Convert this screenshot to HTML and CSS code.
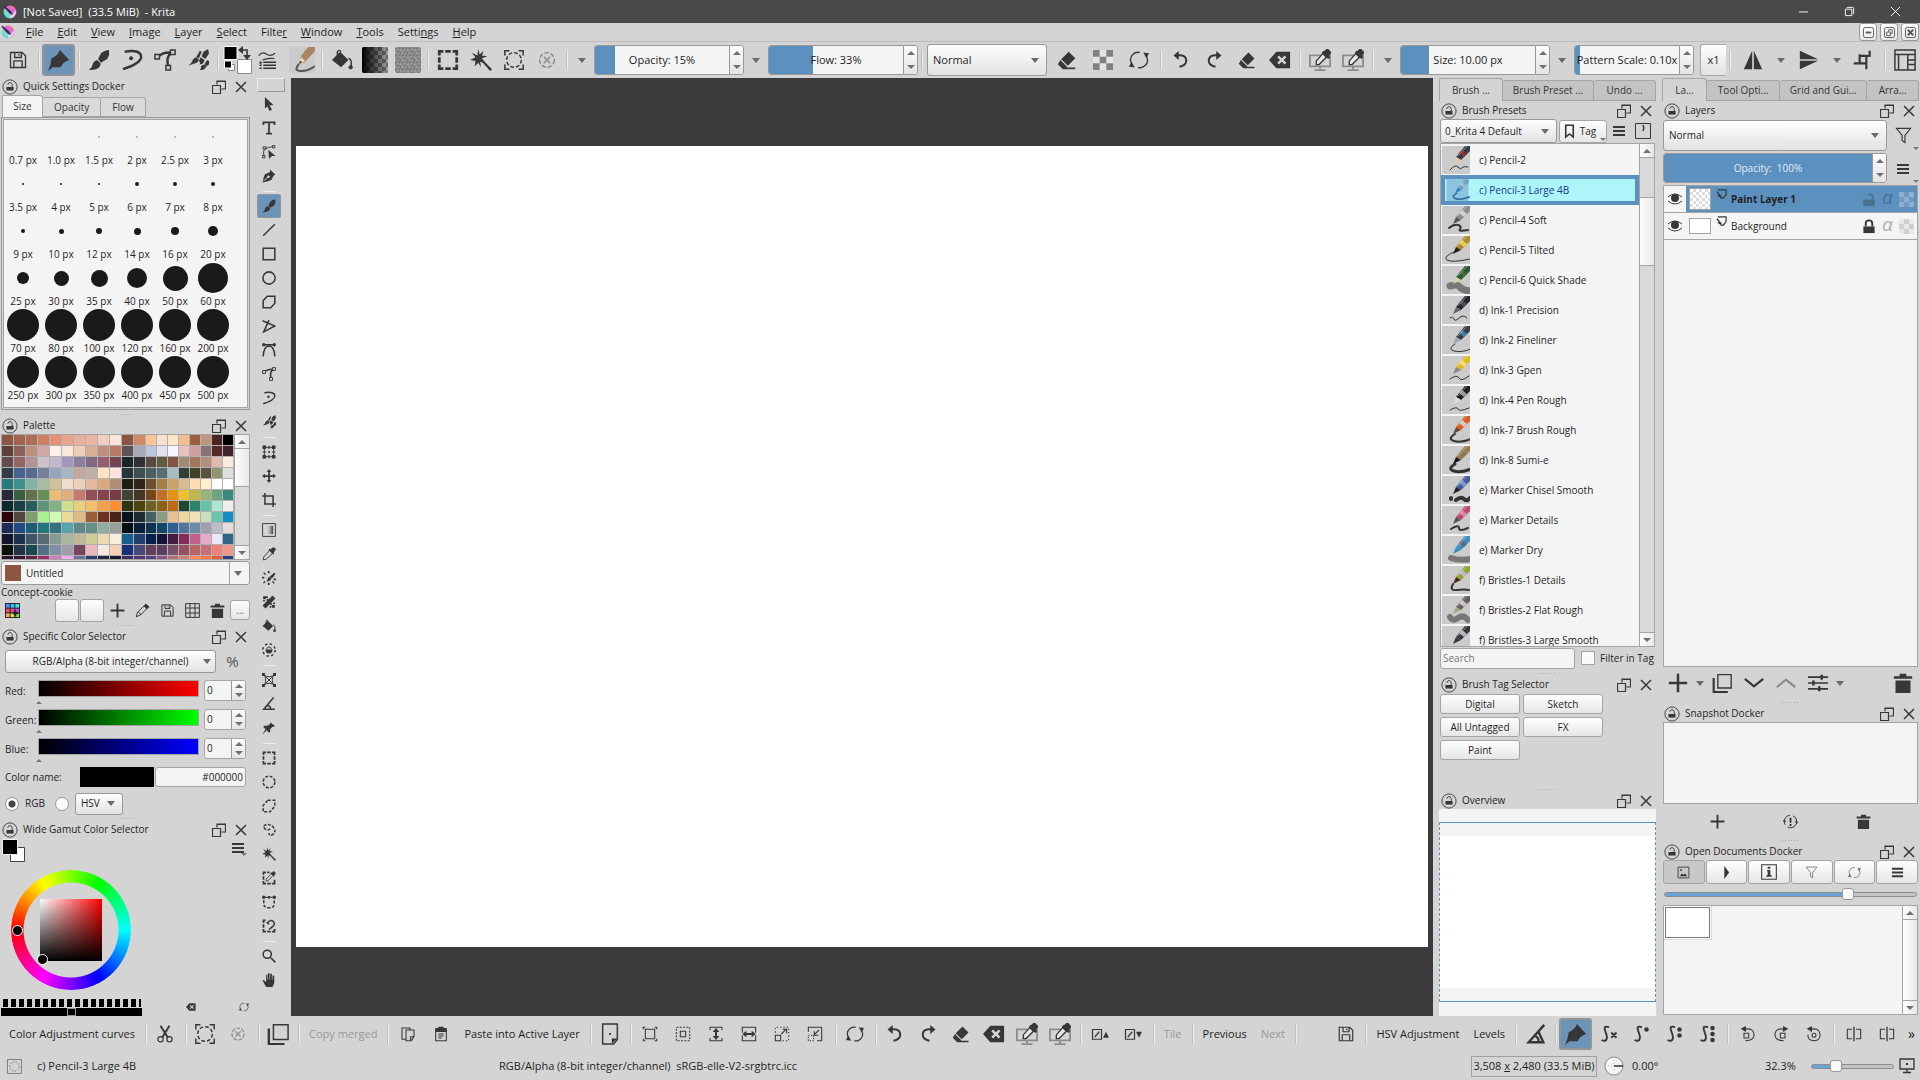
FILE: index.html
```html
<!DOCTYPE html>
<html lang="en">
<head>
<meta charset="utf-8">
<title>[Not Saved] (33.5 MiB) - Krita</title>
<link rel="stylesheet" href="styles.css">
</head>
<body>
<svg class="sprite" aria-hidden="true">
  <defs>
    <linearGradient id="g-logo" x1="0" y1="1" x2="1" y2="0"><stop offset="0" stop-color="#25d8f5"/><stop offset=".35" stop-color="#7fe0c8"/><stop offset=".6" stop-color="#e25cf0"/><stop offset="1" stop-color="#ff8a4a"/></linearGradient>
    <linearGradient id="g-dark"><stop offset="0" stop-color="#fff" stop-opacity="0"/><stop offset="1" stop-color="#373737"/></linearGradient>
    <linearGradient id="g-black"><stop offset="0" stop-color="#000"/><stop offset="1" stop-color="#000" stop-opacity="0"/></linearGradient>
    <pattern id="p-check" width="8" height="8" patternUnits="userSpaceOnUse"><path fill="#a0a0a0" d="M0 0h8v8H0z"/><path fill="#686868" d="M0 0h4v4H0zM4 4h4v4H4z"/></pattern>
    <pattern id="p-noise" width="7" height="7" patternUnits="userSpaceOnUse"><path fill="#8c8c8c" d="M0 0h7v7H0z"/><path fill="#757575" d="M0 1h2v1H0zM4 0h1v2H4zM2 4h2v1H2zM5 5h1v2H5z"/><path fill="#a2a2a2" d="M2 2h1v1H2zM5 3h2v1H5zM0 5h1v2H0zM3 6h1v1H3z"/></pattern>
  </defs>
  <symbol id="logo" viewBox="0 0 24 24"><circle cx="12" cy="12" r="11" fill="url(#g-logo)"/><path d="M2 1l12 10 3 6-6-3L1 3z" fill="#2b2b3b"/><path d="M12 20q8 0 9-9" stroke="#ffd8f4" stroke-width="3" fill="none"/></symbol>
  <symbol id="save" viewBox="0 0 24 24"><path class="s2" d="M3 3h14l4 4v14H3zM8 3v6h8V3M7 21v-8h10v8M13 5v2"/></symbol>
  <symbol id="marker" viewBox="0 0 24 24"><path d="M0 24Q3 18 4 10Q11 7 13 1L23 12Q16 14 14 20L5 20z"/></symbol>
  <symbol id="brush" viewBox="0 0 24 24"><path d="M23 1Q24 6 21 11L14 15L11 11L14 5Q18 1 23 1zM10 12L14 16Q13 23 1 23Q5 20 5 17Q6 13 10 12z"/></symbol>
  <symbol id="dyn" viewBox="0 0 24 24"><path class="s3" d="M4 3Q22 0 22 9Q21 16 2 22"/><circle cx="11" cy="10" r="2.2"/></symbol>
  <symbol id="fpath" viewBox="0 0 24 24"><path class="s3" d="M4 9Q9 3 20 4Q12 8 16 20"/><path class="s2 lite" d="M1 6h5v5H1zM18 1h5v5h-5zM13 18h5v5h-5z"/></symbol>
  <symbol id="multi" viewBox="0 0 24 24"><path d="M23 0l1 5-4 6-4-3 2-5zM15 9l4 3q0 4-5 5 1-2-1-4zM14 2l2 1-3 7-3-1zM9 9l4 2-1 3q-2 2-11 4 5-3 5-6zM22 12l2 1v4l-3 2-2-2zM18 17l3 2q-1 4-7 4 2-2 1-4z"/></symbol>
  <symbol id="lines" viewBox="0 0 24 24"><path class="s2" d="M1 6Q6 0 11 4T23 3M6 12Q12 9 22 10"/><path d="M2 14h3v3H2zM7 14h17v2H7zM2 18h3v2H2zM7 18h17v2H7zM2 22h3v2H2zM7 22h17v2H7z"/></symbol>
  <symbol id="fill" viewBox="0 0 24 24"><path d="M10 3l9 9-8 8-10-8z"/><path class="s2" d="M7 10V3q2-3 4 0M19 10q4 1 3 9"/><circle cx="21.500" cy="20" r="2.300"/></symbol>
  <symbol id="gradbox" viewBox="0 0 26 26"><rect width="26" height="26" rx="2" fill="url(#p-check)"/><rect width="26" height="26" rx="2" fill="url(#g-black)"/></symbol>
  <symbol id="noise" viewBox="0 0 26 26"><rect width="26" height="26" rx="2" fill="url(#p-noise)"/></symbol>
  <symbol id="pencil-thumb" viewBox="0 0 26 26"><path fill="#cbcbcb" d="M0 0h26v26H0z"/><path d="M10 17L12 9L19 0H26V4L16 15z" fill="#a98660"/><path d="M10 17l2-7 4 4z" fill="#f2d9bc"/><path d="M10 17l1-3 2 1z" fill="#222"/><path d="M10 17q-6 7 2 7t14-5" stroke="#555" stroke-width="2" fill="none"/></symbol>
  <symbol id="selrect" viewBox="0 0 24 24"><path d="M1 1h6v3H4v3H1zM9 1h6v3H9zM17 1h6v6h-3V4h-3zM1 9h3v6H1zM20 9h3v6h-3zM1 17h3v3h3v3H1zM9 20h6v3H9zM20 17h3v6h-6v-3h3z"/></symbol>
  <symbol id="selell" viewBox="0 0 24 24"><circle class="s3" cx="12" cy="12" r="10" stroke-dasharray="5 2.850"/></symbol>
  <symbol id="selpoly" viewBox="0 0 24 24"><path class="s3" stroke-dasharray="5 3" d="M10 2h12v10l-8 10H2V11z"/></symbol>
  <symbol id="selfree" viewBox="0 0 24 24"><path class="s3" stroke-dasharray="5 2.500" d="M14 10Q10 14 5 10Q0 5 7 3Q14 1 20 8Q25 15 18 20Q12 23 12 17"/></symbol>
  <symbol id="selbez" viewBox="0 0 24 24"><path class="s3" stroke-dasharray="5 3" d="M3 9v6q0 7 9 7t9-7V9"/><path class="s2" d="M3 4h18"/><circle cx="3" cy="4" r="3"/><circle cx="12" cy="4" r="2.500"/><circle cx="21" cy="4" r="3"/></symbol>
  <symbol id="selmag" viewBox="0 0 24 24"><path d="M1 1h5v3H4v3H1zM1 9h3v6H1zM1 17h3v3h3v3H1zM9 20h6v3H9zM20 17h3v6h-6v-3h3z"/><path class="s3" d="M9 7Q14 0 19 4Q24 9 17 14L12 18M8 5l4 4"/></symbol>
  <symbol id="selpick" viewBox="0 0 24 24"><path d="M1 1h6v3H4v3H1zM9 1h4v3H9zM1 9h3v6H1zM1 17h3v3h3v3H1zM9 20h6v3H9zM20 15h3v8h-6v-3h3z"/><path d="M17 3l3-3 4 4-3 3 1 1-2 2-6-6 2-2z"/><path class="s2" d="M15 6l-8 8v3h3l8-8"/></symbol>
  <symbol id="wand" viewBox="0 0 24 24"><path d="M9 0l1.500 6L15 2l-2 5 6 1-6 2 3 4 8 8-2 2-8-9-3-1 1 6-3-5-4 4 1-6-6-1 6-3-4-5 6 3z"/></symbol>
  <symbol id="selall" viewBox="0 0 24 24"><path class="s2" d="M2 7V2h5M17 2h5v5M22 17v5h-5M7 22H2v-5"/><circle class="s2" cx="12" cy="12" r="8" stroke-dasharray="4 2.280"/></symbol>
  <symbol id="desel" viewBox="0 0 24 24"><circle class="s2" cx="12" cy="12" r="8" stroke-dasharray="5 1.900"/><path class="s2" d="M8.500 8.500l7 7M15.500 8.500l-7 7"/></symbol>
  <symbol id="eraser" viewBox="0 0 24 24"><path d="M14 2l8 8-9 9-8-8zM4 12l8 8v3H7l-6-6z"/><path d="M12 21h10v2H12z"/></symbol>
  <symbol id="checker" viewBox="0 0 24 24"><path fill="#e4e4e4" d="M0 0h24v24H0z"/><path fill="#808080" d="M0 0h8v8H0zM16 0h8v8h-8zM8 8h8v8H8zM0 16h8v8H0zM16 16h8v8h-8z"/></symbol>
  <symbol id="reload" viewBox="0 0 24 24"><path class="s2" d="M4 18Q-1 10 5 5Q8 2 13 3M20 6Q25 14 19 19Q16 22 11 21"/><path d="M3 14l4 7-7-1zM21 10l-4-7 7 1z"/></symbol>
  <symbol id="undo" viewBox="0 0 24 24"><path class="s3" d="M6 6Q19 4 19 13Q19 19 10 21"/><path d="M9 0v12L2 6z"/></symbol>
  <symbol id="redo" viewBox="0 0 24 24"><path class="s3" d="M18 6Q5 4 5 13Q5 19 14 21"/><path d="M15 0v12l7-6z"/></symbol>
  <symbol id="backsp" viewBox="0 0 24 24"><path fill-rule="evenodd" d="M8 3h15v18H8l-8-9zM11 7l-2 2 3 3-3 3 2 2 3-3 3 3 2-2-3-3 3-3-2-2-3 3z"/></symbol>
  <symbol id="monpick" viewBox="0 0 24 24"><path d="M1 7h22v12H1zM12 19v4M6 23h12" fill="none" stroke="#8c8c8c" stroke-width="2"/><path d="M17 2l3-3 5 5-3 3 1 2-2 2-7-7 2-2z"/><path fill="#e8e8e8" stroke="currentColor" stroke-width="1.500" d="M15 5l-7 8v4h3l8-8z"/></symbol>
  <symbol id="mirh" viewBox="0 0 24 24"><path d="M11 1v22H1zM13 1v22h10z"/></symbol>
  <symbol id="mirv" viewBox="0 0 24 24"><path d="M1 11h22L1 1zM1 13h22L1 23z"/></symbol>
  <symbol id="wrap" viewBox="0 0 24 24"><path class="s3" d="M8 5v12M8 7h12M1 16h15M16 7v16M20 1v7"/></symbol>
  <symbol id="layout" viewBox="0 0 24 24"><path class="s2" d="M1 1h22v22H1zM1 6h22M15 6v17M15 12h8M15 17h8M5 6v17"/></symbol>
  <symbol id="lock" viewBox="0 0 18 18"><circle cx="9" cy="9" r="8" fill="none" stroke="currentColor"/><path d="M5 9h8v4H5z"/><path d="M6.500 6.500Q7 4 9 4t2.500 2.500V9" fill="none" stroke="currentColor"/></symbol>
  <symbol id="float" viewBox="0 0 14 14"><path d="M5 4.500V1h8.500v8H9.500M.5 5.500h8v8h-8zM5 1.500h8" fill="none" stroke="currentColor" stroke-width="1.200"/></symbol>
  <symbol id="close" viewBox="0 0 14 14"><path d="M2 2l10 10M12 2L2 12" stroke="currentColor" stroke-width="1.500"/></symbol>
  <symbol id="menu" viewBox="0 0 14 14"><path d="M1 2h12v2H1zM1 6h12v2H1zM1 10h12v2H1z"/></symbol>
  <symbol id="plus" viewBox="0 0 24 24"><path d="M10.500 1h3v9.500H23v3h-9.500V23h-3v-9.500H1v-3h9.500z"/></symbol>
  <symbol id="pencil" viewBox="0 0 24 24"><path class="s2" d="M2 22l2-7L17 2l5 4L9 19zM5 14l5 5"/><path d="M14 5l3-4 6 5-4 4z"/></symbol>
  <symbol id="grid" viewBox="0 0 24 24"><path class="s2" d="M1 1h22v22H1zM8 1v22M16 1v22M1 8h22M1 16h22"/></symbol>
  <symbol id="trash" viewBox="0 0 24 24"><path d="M1 4h22v3H1zM3 9h18v15H3zM8 1h8v3H8z"/></symbol>
  <symbol id="rainbow" viewBox="0 0 16 16"><path fill="#222" d="M0 0h16v16H0z"/><path fill="#4d8cf0" d="M1 1h4v4H1z"/><path fill="#44b8f0" d="M6 1h4v4H6z"/><path fill="#3fe0e0" d="M11 1h4v4h-4z"/><path fill="#e84a5a" d="M1 6h4v4H1z"/><path fill="#d84aa0" d="M6 6h4v4H6z"/><path fill="#c44ae8" d="M11 6h4v4h-4z"/><path fill="#f0b050" d="M1 11h4v4H1z"/><path fill="#e8e050" d="M6 11h4v4H6z"/><path fill="#7ae850" d="M11 11h4v4h-4z"/><path fill="#222" d="M10 8h2v6h-2zM8 10h6v2H8z"/></symbol>
  <symbol id="arrow" viewBox="0 0 24 24"><path d="M5 0l15 14h-7l4 8-4 2-4-8-4 4z"/></symbol>
  <symbol id="text" viewBox="0 0 24 24"><path d="M1 1h22v6h-3V4h-6.500v16H17v3H7v-3h3.500V4H4v3H1z"/></symbol>
  <symbol id="edit" viewBox="0 0 24 24"><path class="s2" d="M1 18h4v4H1zM2 3h5v4H2zM18 1h4v4h-4zM3 18Q2 8 5 7Q12 3 18 3"/><path d="M11 8l12 11h-6l-5 5z"/></symbol>
  <symbol id="calli" viewBox="0 0 24 24"><path fill-rule="evenodd" d="M14 1l9 9-3 1-4 8Q9 22 1 23Q2 15 5 9l9-4zM11 11a2.200 2.200 0 1 0 .1 0zM3 21l7-6-1-1-7 6z"/></symbol>
  <symbol id="line" viewBox="0 0 24 24"><path class="s3" d="M2 22L22 2"/></symbol>
  <symbol id="rect" viewBox="0 0 24 24"><path class="s3" d="M2 2h20v20H2z"/></symbol>
  <symbol id="ell" viewBox="0 0 24 24"><circle class="s3" cx="12" cy="12" r="10.500"/></symbol>
  <symbol id="poly" viewBox="0 0 24 24"><path class="s3" d="M9 2h13v12l-7 8H2V10z"/></symbol>
  <symbol id="polyl" viewBox="0 0 24 24"><path class="s3" d="M1 3l21 9L3 22 12 2"/></symbol>
  <symbol id="bez" viewBox="0 0 24 24"><path class="s3" d="M2 23Q3 5 12 5T22 23M3 3h18"/><circle cx="3" cy="3" r="3"/><circle cx="21" cy="3" r="3"/></symbol>
  <symbol id="transform" viewBox="0 0 24 24"><path class="s2" d="M1 4h22M4 1v22M1 20h22M20 1v22"/><path d="M1 1h6v6H1zM17 1h6v6h-6zM1 17h6v6H1zM17 17h6v6h-6zM10.500 10.500h3v3h-3zM11 1h2v6h-2zM11 17h2v6h-2zM1 11h6v2H1zM17 11h6v2h-6z"/></symbol>
  <symbol id="move" viewBox="0 0 24 24"><path d="M12 0l4 5h-2.500v5.500H19V8l5 4-5 4v-2.500h-5.500V19H16l-4 5-4-5h2.500v-5.500H5V16l-5-4 5-4v2.500h5.500V5H8z"/></symbol>
  <symbol id="crop" viewBox="0 0 24 24"><path class="s3" d="M5 0v19h19M0 5h19v19"/></symbol>
  <symbol id="gradient" viewBox="0 0 24 24"><rect x="5" y="5" width="14" height="14" fill="url(#g-dark)"/><path class="s2" d="M1 1h22v22H1z"/></symbol>
  <symbol id="picker" viewBox="0 0 24 24"><path d="M15 4l3-3q4-1 5 1t0 4l-3 3 1 2-2 2-8-8 2-2z"/><path class="s2" d="M12 7l-9 10-1 5 5-1 10-9"/></symbol>
  <symbol id="colorize" viewBox="0 0 24 24"><path d="M21 3l2 2-6 8-4-3zM12 10l4 3q-1 5-9 5 3-2 3-5z"/><path d="M10 0h3v4h-3zM2 3l2-1 3 4-2 1zM0 10h4v3H0zM2 19l3-2 1 2-3 3zM10 20h3v4h-3zM17 18l2-1 3 4-2 1zM20 13h4v3h-4z"/></symbol>
  <symbol id="patch" viewBox="0 0 24 24"><path d="M18 1l5 5L6 23l-5-5zM2 2h5v5H2zM8 7h3v3H8zM7 2h3v3H7zM2 8h3v3H2zM14 14h3v3h-3zM17 17h5v5h-5zM19 13h3v3h-3zM13 19h3v3h-3z"/></symbol>
  <symbol id="enclose" viewBox="0 0 24 24"><circle class="s3" cx="12" cy="12" r="10.500" stroke-dasharray="4 4.250"/><path d="M6 11h12q0 7-6 7t-6-7z"/><path class="s2" d="M8 11q0-4 4-4t4 4"/></symbol>
  <symbol id="assist" viewBox="0 0 24 24"><path class="s2" d="M2 2l20 20M22 2L2 22M5 5Q8 12 5 19M19 5Q16 12 19 19M5 5Q12 8 19 5M5 19Q12 16 19 19"/><path d="M0 0h5v5H0zM19 0h5v5h-5zM0 19h5v5H0zM19 19h5v5h-5z"/></symbol>
  <symbol id="measure" viewBox="0 0 24 24"><path class="s3" d="M20 1L3 21h19M9 15q6 0 6 6"/></symbol>
  <symbol id="angle" viewBox="0 0 24 24"><path class="s3" d="M21 2L4 21h16L15 10M9 14q6 0 6 7"/></symbol>
  <symbol id="pin" viewBox="0 0 24 24"><path d="M14 2l8 6-1 2h-3l-4 4v5l-2 1-4-4-8 8 6-10-4-4 2-2h5l5-3z"/></symbol>
  <symbol id="zoom" viewBox="0 0 24 24"><circle class="s3" cx="9" cy="9" r="7"/><path d="M14 16l2-2 8 8-2 2z"/></symbol>
  <symbol id="hand" viewBox="0 0 24 24"><path d="M7 24L1 13l2-1 4 4V4q1-2 2 0v7h1V1q2-2 3 0v10h1V2q1-2 3 0v9h1V5q2-2 3 0v12l-3 7z"/></symbol>
  <symbol id="tag" viewBox="0 0 24 24"><path class="s3" d="M6 2h12v19l-6-5-6 5z"/></symbol>
  <symbol id="zip" viewBox="0 0 16 16"><path d="M.5.5h15v15H.5zM8.500 2v6M7 3h1M8 5h2M7 7h1" fill="none" stroke="currentColor"/></symbol>
  <symbol id="funnel" viewBox="0 0 24 24"><path class="s2" d="M2 2h20l-8 10v10l-4-3v-7z"/></symbol>
  <symbol id="eye" viewBox="0 0 16 16"><circle cx="8" cy="7" r="4"/><path d="M1 6q7-6 14 0M1 10q7 6 14 0" fill="none" stroke="currentColor"/></symbol>
  <symbol id="kind" viewBox="0 0 12 12"><path d="M2 1h9v5l-3 4H5M1 3l5 6M2 7l5 3" fill="none" stroke="currentColor" stroke-width="1.300"/></symbol>
  <symbol id="padlock" viewBox="0 0 14 16"><path d="M1 8h12v7H1z"/><path d="M3.500 8V5q0-3.500 3.500-3.500T10.500 5v3" fill="none" stroke="currentColor" stroke-width="2"/></symbol>
  <symbol id="unlocked" viewBox="0 0 14 16"><path d="M1 8h12v7H1z"/><path d="M11 8V5Q10 1.500 6 3" fill="none" stroke="currentColor" stroke-width="2"/></symbol>
  <symbol id="dup" viewBox="0 0 24 24"><path class="s2" d="M7 2h16v16H7z"/><path class="s3" d="M2 6v17h17"/></symbol>
  <symbol id="down" viewBox="0 0 24 24"><path class="s3" d="M1 7l11 9 11-9"/></symbol>
  <symbol id="up" viewBox="0 0 24 24"><path class="s3" d="M1 17l11-9 11 9"/></symbol>
  <symbol id="sliders" viewBox="0 0 24 24"><path d="M0 4h24v2H0zM0 11h24v2H0zM0 18h24v2H0zM15 2h3v6h-3zM5 9h3v6H5zM12 16h3v6h-3z"/></symbol>
  <symbol id="restore" viewBox="0 0 24 24"><circle class="s2" cx="12" cy="12" r="10" stroke-dasharray="20 5"/><path d="M10.500 6h3v8h-3zM10.500 16h3v3h-3zM0 9l5 2-3 4zM24 15l-5-2 3-4z"/></symbol>
  <symbol id="picture" viewBox="0 0 24 24"><path class="s2" d="M2 2h20v20H2z"/><path d="M5 19l4-5 3 2 3-2 4 5zM6 6h3v3H6z"/></symbol>
  <symbol id="play" viewBox="0 0 24 24"><path d="M8 0l9 12-9 12z"/></symbol>
  <symbol id="info" viewBox="0 0 24 24"><path class="s2" d="M1 1h22v22H1z"/><path d="M10 4h4v3h-4zM9 9h5v8h2v2H8v-2h2v-6H9z"/></symbol>
  <symbol id="cut" viewBox="0 0 24 24"><path class="s3" d="M6 1l10 16M18 1L8 17"/><circle class="s2" cx="6" cy="19" r="3.500"/><circle class="s2" cx="18" cy="19" r="3.500"/></symbol>
  <symbol id="copy" viewBox="0 0 24 24"><path class="s2" d="M9 20H3V3h12v3M9 6h12v10l-4 6H9zM21 16h-5v5"/></symbol>
  <symbol id="paste" viewBox="0 0 24 24"><path class="s2" d="M4 4h16v18H4zM8 12h8M8 15h8M8 18h5"/><path d="M4 3h16v6H4zM8 1h8v3H8z"/></symbol>
  <symbol id="newdoc" viewBox="0 0 24 24"><path class="s2" d="M4 1h16v17l-4 5H4z"/><path d="M14 23v-6h6zM11 11h2v2h-2z"/></symbol>
  <symbol id="c1" viewBox="0 0 24 24"><path class="s2" d="M5 5h14v14H5zM1 2h4M2 1v4M19 2h4M22 1v4M22 19v4M19 22h4M5 22H1M2 19v4"/></symbol>
  <symbol id="c2" viewBox="0 0 24 24"><path class="s2" stroke-dasharray="3 2" d="M2 2h20v20H2z"/><path class="s2" d="M8 8h8v8H8z"/></symbol>
  <symbol id="c3" viewBox="0 0 24 24"><path class="s2" d="M3 6V2h18v4M3 18v4h18v-4"/><path d="M12 3l5 6h-3.500v6H17l-5 6-5-6h3.500V9H7z"/></symbol>
  <symbol id="c4" viewBox="0 0 24 24"><path class="s2" d="M2 10V2h20v8M2 14v8h20v-8"/><path d="M2 12l6-5v3.500h8V7l6 5-6 5v-3.500H8V17z"/></symbol>
  <symbol id="c5" viewBox="0 0 24 24"><path class="s2" d="M2 14h8v8H2zM11 12l7-7M13 5h6v6"/><path class="s2" stroke-dasharray="2 3" d="M2 10V2h20v20H13"/></symbol>
  <symbol id="c6" viewBox="0 0 24 24"><path class="s2" d="M2 9V2h20v20h-7M18 6l-7 7M11 8v6h6"/><path class="s2" stroke-dasharray="2 2" d="M2 14h8v8H2z"/></symbol>
  <symbol id="lup" viewBox="0 0 24 24"><path class="s2" d="M2 6h12v13H2zM5 16l6-7"/><path d="M16 17l4-8 4 8z"/></symbol>
  <symbol id="ldn" viewBox="0 0 24 24"><path class="s2" d="M2 6h12v13H2zM5 16l6-7"/><path d="M16 9l4 8 4-8z"/></symbol>
  <symbol id="sx" viewBox="0 0 24 24"><path class="s3" d="M12 3Q4 0 7 8T9 18Q8 23 2 20M15 10l7 7M22 10l-7 7"/></symbol>
  <symbol id="s1" viewBox="0 0 24 24"><path class="s3" d="M12 3Q4 0 7 8T9 18Q8 23 2 20"/><circle cx="18" cy="6" r="3"/></symbol>
  <symbol id="s22" viewBox="0 0 24 24"><path class="s3" d="M12 3Q4 0 7 8T9 18Q8 23 2 20"/><circle cx="18" cy="6" r="3"/><circle cx="18" cy="14" r="3"/></symbol>
  <symbol id="s33" viewBox="0 0 24 24"><path class="s3" d="M12 3Q4 0 7 8T9 18Q8 23 2 20"/><circle cx="18" cy="4" r="3"/><circle cx="18" cy="12" r="3"/><circle cx="18" cy="20" r="3"/></symbol>
  <symbol id="rotl" viewBox="0 0 24 24"><path class="s2" d="M6 5Q20 2 21 12T8 22M6 11h7v7H6z"/><path d="M9 0v9L1 4z"/></symbol>
  <symbol id="rotr" viewBox="0 0 24 24"><path class="s2" d="M18 5Q4 2 3 12T16 22M11 11h7v7h-7z"/><path d="M15 0v9l8-5z"/></symbol>
  <symbol id="rot0" viewBox="0 0 24 24"><path class="s2" d="M6 5Q20 2 21 12T12 22T3 13"/><circle class="s2" cx="12" cy="14" r="3"/><path d="M9 0v9L1 4z"/></symbol>
  <symbol id="split" viewBox="0 0 24 24"><path class="s2" d="M9 5H2v14h7M15 5h7v14h-7"/><path d="M11 1h2v22h-2z"/></symbol>
  <symbol id="selmode" viewBox="0 0 16 16"><path d="M.5.5h15v15H.5z" fill="none" stroke="#777"/><circle cx="8" cy="8" r="5" fill="none" stroke="#777" stroke-dasharray="1.500 1.500"/></symbol>
  <symbol id="fit-page" viewBox="0 0 16 16"><path d="M1 1h14v10H1zM8 11v3M4 14.500h8" fill="none" stroke="currentColor" stroke-width="1.300"/><path d="M7 5h2v2H7z"/></symbol>
</svg>

<header class="titlebar">
  <svg class="logo"><use href="#logo"/></svg>
  <h1>[Not Saved]&nbsp; (33.5 MiB)&nbsp; - Krita</h1>
  <button class="wc" aria-label="Minimize"><svg viewBox="0 0 12 12"><path d="M1 6.500h10" stroke="#fff"/></svg></button>
  <button class="wc" aria-label="Restore"><svg viewBox="0 0 12 12"><path d="M3.500 2.500v-1h6q1 0 1 1v6h-1M1.500 3.500h7v7h-7z" fill="none" stroke="#fff"/></svg></button>
  <button class="wc" aria-label="Close"><svg viewBox="0 0 12 12"><path d="M1 1l10 10M11 1L1 11" stroke="#fff"/></svg></button>
</header>

<nav class="menubar">
  <svg class="logo"><use href="#logo"/></svg>
  <button><u>F</u>ile</button><button><u>E</u>dit</button><button><u>V</u>iew</button><button><u>I</u>mage</button><button><u>L</u>ayer</button><button><u>S</u>elect</button><button>Filte<u>r</u></button><button><u>W</u>indow</button><button><u>T</u>ools</button><button>Setti<u>n</u>gs</button><button><u>H</u>elp</button>
  <span class="grow"></span>
  <button class="mdi" aria-label="Minimize document"><svg viewBox="0 0 12 12"><rect x=".5" y=".5" width="11" height="11" rx="2"/><path d="M3 6h6" stroke-width="2"/></svg></button>
  <button class="mdi" aria-label="Restore document"><svg viewBox="0 0 12 12"><rect x=".5" y=".5" width="11" height="11" rx="2"/><path d="M3 5.500h4v4H3zM5 5V3h4v4H7"/></svg></button>
  <button class="mdi" aria-label="Close document"><svg viewBox="0 0 12 12"><rect x=".5" y=".5" width="11" height="11" rx="2"/><path d="M3 3l6 6M9 3L3 9" stroke-width="2"/></svg></button>
</nav>

<div class="toolbar top">
  <button class="tb" aria-label="Save"><svg><use href="#save"/></svg></button>
  <span class="sep"></span>
  <button class="tb on" aria-label="Brush tool"><svg><use href="#marker"/></svg></button>
  <span class="sep"></span>
  <button class="tb" aria-label="Freehand brush"><svg><use href="#brush"/></svg></button>
  <button class="tb" aria-label="Dynamic brush"><svg><use href="#dyn"/></svg></button>
  <button class="tb" aria-label="Freehand path"><svg><use href="#fpath"/></svg></button>
  <button class="tb" aria-label="Multibrush"><svg><use href="#multi"/></svg></button>
  <span class="sep"></span>
  <button class="tb" aria-label="Foreground and background colors"><svg class="wide" viewBox="0 0 30 28"><path d="M14.500 13.500h14v14h-14zM5.500 18.500h6v6h-6z" fill="#fff" stroke="#888"/><path d="M1 .5h13v13H1zM1.500 15h7v7h-7z" fill="#000" stroke="#fff"/><path d="M19 4h5v8" class="s2"/><path d="M20 0v8l-5-4zM20 9h8l-4 5z"/></svg></button>
  <button class="tb slim" aria-label="Brush options"><svg><use href="#lines"/></svg></button>
  <button class="tb big" aria-label="Choose brush preset"><svg><use href="#pencil-thumb"/></svg></button>
  <span class="sep"></span>
  <button class="tb" aria-label="Fill"><svg><use href="#fill"/></svg></button>
  <button class="tb big" aria-label="Gradients"><svg><use href="#gradbox"/></svg></button>
  <button class="tb big" aria-label="Patterns"><svg><use href="#noise"/></svg></button>
  <span class="sep"></span>
  <button class="tb" aria-label="Rectangular selection"><svg><use href="#selrect"/></svg></button>
  <button class="tb" aria-label="Contiguous selection"><svg><use href="#wand"/></svg></button>
  <button class="tb" aria-label="Select all"><svg><use href="#selall"/></svg></button>
  <button class="tb dim" aria-label="Deselect"><svg><use href="#desel"/></svg></button>
  <span class="sep"></span>
  <button class="drop" aria-label="Opacity menu"></button>
  <div class="spin"><input class="fill15" aria-label="Opacity" value="Opacity: 15%"><span class="steps"></span></div>
  <button class="drop" aria-label="Flow menu"></button>
  <div class="spin"><input class="fill33" aria-label="Flow" value="Flow: 33%"><span class="steps"></span></div>
  <span class="sep"></span>
  <div class="combo blend"><select aria-label="Blending mode"><option>Normal</option></select></div>
  <button class="tb roomy" aria-label="Eraser mode"><svg><use href="#eraser"/></svg></button>
  <button class="tb roomy" aria-label="Preserve alpha"><svg><use href="#checker"/></svg></button>
  <button class="tb roomy" aria-label="Reload preset"><svg><use href="#reload"/></svg></button>
  <span class="sep"></span>
  <button class="tb small" aria-label="Undo"><svg><use href="#undo"/></svg></button>
  <button class="tb small" aria-label="Redo"><svg><use href="#redo"/></svg></button>
  <button class="tb small" aria-label="Clear"><svg><use href="#eraser"/></svg></button>
  <button class="tb" aria-label="Delete"><svg><use href="#backsp"/></svg></button>
  <span class="sep"></span>
  <button class="tb" aria-label="Pick foreground from screen"><svg><use href="#monpick"/></svg></button>
  <button class="tb" aria-label="Pick background from screen"><svg><use href="#monpick"/></svg></button>
  <span class="sep"></span>
  <button class="drop" aria-label="Size menu"></button>
  <div class="spin"><input class="fill21" aria-label="Size" value="Size: 10.00 px"><span class="steps"></span></div>
  <button class="drop" aria-label="Pattern scale menu"></button>
  <div class="spin short"><input class="fill6" aria-label="Pattern scale" value="Pattern Scale: 0.10x"><span class="steps"></span></div>
  <button class="x1">x1</button>
  <span class="sep"></span>
  <button class="tb mir" aria-label="Mirror horizontally"><svg><use href="#mirh"/></svg></button>
  <button class="drop narrow" aria-label="Mirror options"></button>
  <button class="tb mir" aria-label="Mirror vertically"><svg><use href="#mirv"/></svg></button>
  <button class="drop narrow" aria-label="Mirror options"></button>
  <button class="tb roomy" aria-label="Wrap around mode"><svg><use href="#wrap"/></svg></button>
  <span class="sep"></span>
  <button class="tb" aria-label="Choose workspace"><svg><use href="#layout"/></svg></button>
</div>

<main class="work">
  <aside class="dock left">
    <section>
      <header class="dt"><button aria-label="Lock"><svg class="lk"><use href="#lock"/></svg></button><h2>Quick Settings Docker</h2><button aria-label="Float"><svg><use href="#float"/></svg></button><button aria-label="Close"><svg><use href="#close"/></svg></button></header>
      <div class="tabs light"><button class="cur">Size</button><button>Opacity</button><button>Flow</button></div>
      <div class="frame"><div class="sizes" id="sizes"></div></div>
    </section>
    <div class="grip"></div>
    <section>
      <header class="dt"><button aria-label="Lock"><svg class="lk"><use href="#lock"/></svg></button><h2>Palette</h2><button aria-label="Float"><svg><use href="#float"/></svg></button><button aria-label="Close"><svg><use href="#close"/></svg></button></header>
      <div class="palette"><div class="swatches" id="swatches"></div><div class="sb"><i class="a up"></i><i class="th pal"></i><i class="a dn"></i></div></div>
      <div class="combo named"><span class="chip"></span><select aria-label="Color name"><option>Untitled</option></select></div>
      <p class="pname">Concept-cookie</p>
      <div class="palrow">
        <button class="pi first" aria-label="Palettes"><svg><use href="#rainbow"/></svg></button>
        <button class="raised" aria-label="Foreground"></button><button class="raised" aria-label="Background"></button>
        <button class="pi" aria-label="Add"><svg><use href="#plus"/></svg></button>
        <button class="pi" aria-label="Edit"><svg><use href="#pencil"/></svg></button>
        <button class="pi" aria-label="Save palette"><svg><use href="#save"/></svg></button>
        <button class="pi" aria-label="Grid"><svg><use href="#grid"/></svg></button>
        <button class="pi" aria-label="Remove"><svg><use href="#trash"/></svg></button>
        <button class="raised more">...</button>
      </div>
    </section>
    <div class="grip"></div>
    <section>
      <header class="dt"><button aria-label="Lock"><svg class="lk"><use href="#lock"/></svg></button><h2>Specific Color Selector</h2><button aria-label="Float"><svg><use href="#float"/></svg></button><button aria-label="Close"><svg><use href="#close"/></svg></button></header>
      <div class="model"><div class="combo"><select aria-label="Color model"><option>RGB/Alpha (8-bit integer/channel)</option></select></div><button>%</button></div>
      <div class="chan"><label for="r">Red:</label><div class="bar red"></div><div class="num"><input id="r" value="0"><span class="steps"></span></div></div>
      <div class="chan"><label for="g">Green:</label><div class="bar green"></div><div class="num"><input id="g" value="0"><span class="steps"></span></div></div>
      <div class="chan"><label for="b">Blue:</label><div class="bar blue"></div><div class="num"><input id="b" value="0"><span class="steps"></span></div></div>
      <div class="cname"><label for="hex">Color name:</label><span class="black"></span><input id="hex" value="#000000"></div>
      <div class="modes"><input type="radio" name="m" id="m1" checked><label for="m1">RGB</label><input type="radio" name="m" aria-label="Other model"><div class="combo"><select aria-label="Model"><option>HSV</option></select></div></div>
    </section>
    <div class="grip"></div>
    <section class="gamut">
      <header class="dt"><button aria-label="Lock"><svg class="lk"><use href="#lock"/></svg></button><h2>Wide Gamut Color Selector</h2><button aria-label="Float"><svg><use href="#float"/></svg></button><button aria-label="Close"><svg><use href="#close"/></svg></button></header>
      <div class="gtop"><svg class="fgbg" viewBox="0 0 24 24"><path d="M8.500 8.500h14v14h-14z" fill="#fff" stroke="#444"/><path d="M.5.500h15v15H.5z" fill="#000" stroke="#eee"/></svg><button class="mn tri" aria-label="Selector menu"><svg><use href="#menu"/></svg></button></div>
      <div class="wheel"><span class="ring"></span><span class="sv"></span><span class="knob hue"></span><span class="knob val"></span></div>
      <div class="hist"><div class="strips"><div class="ticks"></div><div class="line"><span></span></div></div><button aria-label="Clear history"><svg><use href="#backsp"/></svg></button><button aria-label="Refresh"><svg><use href="#reload"/></svg></button></div>
    </section>
  </aside>

  <aside class="toolbox">
    <div class="handle"></div>
    <button aria-label="Select shapes"><svg><use href="#arrow"/></svg></button>
    <button aria-label="Text"><svg><use href="#text"/></svg></button>
    <button aria-label="Edit shapes"><svg><use href="#edit"/></svg></button>
    <button aria-label="Calligraphy"><svg><use href="#calli"/></svg></button>
    <hr>
    <button class="on" aria-label="Freehand brush"><svg><use href="#brush"/></svg></button>
    <button aria-label="Line"><svg><use href="#line"/></svg></button>
    <button aria-label="Rectangle"><svg><use href="#rect"/></svg></button>
    <button aria-label="Ellipse"><svg><use href="#ell"/></svg></button>
    <button aria-label="Polygon"><svg><use href="#poly"/></svg></button>
    <button aria-label="Polyline"><svg><use href="#polyl"/></svg></button>
    <button aria-label="Bezier curve"><svg><use href="#bez"/></svg></button>
    <button aria-label="Freehand path"><svg><use href="#fpath"/></svg></button>
    <button aria-label="Dynamic brush"><svg><use href="#dyn"/></svg></button>
    <button aria-label="Multibrush"><svg><use href="#multi"/></svg></button>
    <hr>
    <button aria-label="Transform"><svg><use href="#transform"/></svg></button>
    <button aria-label="Move"><svg><use href="#move"/></svg></button>
    <button aria-label="Crop"><svg><use href="#crop"/></svg></button>
    <hr>
    <button aria-label="Gradient"><svg><use href="#gradient"/></svg></button>
    <button aria-label="Color sampler"><svg><use href="#picker"/></svg></button>
    <button aria-label="Colorize mask"><svg><use href="#colorize"/></svg></button>
    <button aria-label="Smart patch"><svg><use href="#patch"/></svg></button>
    <button aria-label="Fill"><svg><use href="#fill"/></svg></button>
    <button aria-label="Enclose and fill"><svg><use href="#enclose"/></svg></button>
    <hr>
    <button aria-label="Assistants"><svg><use href="#assist"/></svg></button>
    <button aria-label="Measure"><svg><use href="#measure"/></svg></button>
    <button aria-label="Reference images"><svg><use href="#pin"/></svg></button>
    <hr>
    <button aria-label="Rectangular selection"><svg><use href="#selrect"/></svg></button>
    <button aria-label="Elliptical selection"><svg><use href="#selell"/></svg></button>
    <button aria-label="Polygonal selection"><svg><use href="#selpoly"/></svg></button>
    <button aria-label="Freehand selection"><svg><use href="#selfree"/></svg></button>
    <button aria-label="Contiguous selection"><svg><use href="#wand"/></svg></button>
    <button aria-label="Similar color selection"><svg><use href="#selpick"/></svg></button>
    <button aria-label="Bezier selection"><svg><use href="#selbez"/></svg></button>
    <button aria-label="Magnetic selection"><svg><use href="#selmag"/></svg></button>
    <hr>
    <button aria-label="Zoom"><svg><use href="#zoom"/></svg></button>
    <button aria-label="Pan"><svg><use href="#hand"/></svg></button>
  </aside>

  <div class="canvas"><div class="sheet"></div></div>

  <aside class="dock mid">
    <div class="tabs"><button class="cur">Brush ...</button><button>Brush Preset ...</button><button>Undo ...</button></div>
    <header class="dt"><button aria-label="Lock"><svg class="lk"><use href="#lock"/></svg></button><h2>Brush Presets</h2><button aria-label="Float"><svg><use href="#float"/></svg></button><button aria-label="Close"><svg><use href="#close"/></svg></button></header>
    <div class="presetbar"><div class="combo"><select aria-label="Tag filter"><option>0_Krita 4 Default</option></select></div><button class="tagbtn tri"><svg><use href="#tag"/></svg>Tag</button><button class="mn" aria-label="View options"><svg><use href="#menu"/></svg></button><button class="zipbtn" aria-label="Storage"><svg><use href="#zip"/></svg></button></div>
    <div class="presets"><ul id="presets"></ul><div class="sb"><i class="a up"></i><i class="gap"></i><i class="th pre"></i><i class="a dn"></i></div></div>
    <div class="search"><input type="text" placeholder="Search" aria-label="Search"><input type="checkbox" id="in-tag"><label for="in-tag">Filter in Tag</label></div>
    <div class="grip"></div>
    <header class="dt"><button aria-label="Lock"><svg class="lk"><use href="#lock"/></svg></button><h2>Brush Tag Selector</h2><button aria-label="Float"><svg><use href="#float"/></svg></button><button aria-label="Close"><svg><use href="#close"/></svg></button></header>
    <div class="tags"><button>Digital</button><button>Sketch</button><button>All Untagged</button><button>FX</button><button>Paint</button></div>
    <div class="grip"></div>
    <header class="dt"><button aria-label="Lock"><svg class="lk"><use href="#lock"/></svg></button><h2>Overview</h2><button aria-label="Float"><svg><use href="#float"/></svg></button><button aria-label="Close"><svg><use href="#close"/></svg></button></header>
    <div class="overview"><div class="view"><div></div></div></div>
  </aside>

  <aside class="dock right">
    <div class="tabs"><button class="cur">La...</button><button>Tool Opti...</button><button>Grid and Gui...</button><button>Arra...</button></div>
    <header class="dt"><button aria-label="Lock"><svg class="lk"><use href="#lock"/></svg></button><h2>Layers</h2><button aria-label="Float"><svg><use href="#float"/></svg></button><button aria-label="Close"><svg><use href="#close"/></svg></button></header>
    <div class="lrow"><div class="combo"><select aria-label="Layer blending mode"><option>Normal</option></select></div><button class="side tri" aria-label="Filter layers"><svg class="fun"><use href="#funnel"/></svg></button></div>
    <div class="lrow"><div class="spin"><input class="full" aria-label="Layer opacity" value="Opacity:  100%"><span class="steps"></span></div><button class="side tri" aria-label="Layer menu"><svg><use href="#menu"/></svg></button></div>
    <ul class="layers">
      <li class="sel"><button class="eye" aria-label="Visible"><svg><use href="#eye"/></svg></button><div class="lbody"><span class="lth trans"></span><svg class="kind"><use href="#kind"/></svg><b>Paint Layer 1</b><svg class="st"><use href="#unlocked"/></svg><em>α</em><span class="ck"></span></div></li>
      <li><button class="eye" aria-label="Visible"><svg><use href="#eye"/></svg></button><div class="lbody"><span class="lth"></span><svg class="kind"><use href="#kind"/></svg><span class="nm">Background</span><svg class="st"><use href="#padlock"/></svg><em>α</em><span class="ck"></span></div></li>
    </ul>
    <div class="lacts"><button aria-label="Add layer"><svg><use href="#plus"/></svg></button><button class="drop" aria-label="Add menu"></button><button aria-label="Duplicate"><svg><use href="#dup"/></svg></button><button aria-label="Move down"><svg><use href="#down"/></svg></button><button class="dim" aria-label="Move up"><svg><use href="#up"/></svg></button><button aria-label="Properties"><svg><use href="#sliders"/></svg></button><button class="drop" aria-label="Properties menu"></button><span class="grow"></span><button aria-label="Delete layer"><svg><use href="#trash"/></svg></button></div>
    <div class="grip"></div>
    <header class="dt"><button aria-label="Lock"><svg class="lk"><use href="#lock"/></svg></button><h2>Snapshot Docker</h2><button aria-label="Float"><svg><use href="#float"/></svg></button><button aria-label="Close"><svg><use href="#close"/></svg></button></header>
    <div class="snaps"></div>
    <div class="sacts"><button aria-label="Create snapshot"><svg><use href="#plus"/></svg></button><button aria-label="Switch to snapshot"><svg><use href="#restore"/></svg></button><button aria-label="Remove snapshot"><svg><use href="#trash"/></svg></button></div>
    <div class="grip"></div>
    <header class="dt"><button aria-label="Lock"><svg class="lk"><use href="#lock"/></svg></button><h2>Open Documents Docker</h2><button aria-label="Float"><svg><use href="#float"/></svg></button><button aria-label="Close"><svg><use href="#close"/></svg></button></header>
    <div class="docbtns"><button class="down" aria-label="Thumbnails"><svg><use href="#picture"/></svg></button><button aria-label="Play"><svg><use href="#play"/></svg></button><button aria-label="Info"><svg class="lg"><use href="#info"/></svg></button><button aria-label="Filter"><svg class="mut"><use href="#funnel"/></svg></button><button aria-label="Refresh"><svg class="mut"><use href="#reload"/></svg></button><button aria-label="Menu"><svg><use href="#menu"/></svg></button></div>
    <input class="range docs" type="range" min="0" max="100" value="74" aria-label="Thumbnail size">
    <div class="docs-list"><div class="doc"><span></span></div><div class="sb"><i class="a up"></i><i class="th all"></i><i class="a dn"></i></div></div>
  </aside>
</main>

<div class="toolbar bottom">
  <button class="tx">Color Adjustment curves</button>
  <span class="sep"></span>
  <button class="tb small" aria-label="Cut"><svg><use href="#cut"/></svg></button>
  <span class="sep"></span>
  <button class="tb" aria-label="Select all"><svg><use href="#selall"/></svg></button>
  <button class="tb dim small" aria-label="Deselect"><svg><use href="#desel"/></svg></button>
  <span class="sep"></span>
  <button class="tb" aria-label="Duplicate layer"><svg><use href="#dup"/></svg></button>
  <span class="sep"></span>
  <button class="tx" disabled>Copy merged</button>
  <span class="sep"></span>
  <button class="tb tiny" aria-label="Copy"><svg><use href="#copy"/></svg></button>
  <button class="tb tiny" aria-label="Paste"><svg><use href="#paste"/></svg></button>
  <button class="tx">Paste into Active Layer</button>
  <span class="sep"></span>
  <button class="tb" aria-label="New"><svg><use href="#newdoc"/></svg></button>
  <span class="sep"></span>
  <button class="tb tiny" aria-label="Resize image"><svg><use href="#c1"/></svg></button>
  <button class="tb tiny" aria-label="Scale selection"><svg><use href="#c2"/></svg></button>
  <button class="tb tiny" aria-label="Flip vertically"><svg><use href="#c3"/></svg></button>
  <button class="tb tiny" aria-label="Flip horizontally"><svg><use href="#c4"/></svg></button>
  <button class="tb tiny" aria-label="Scale image"><svg><use href="#c5"/></svg></button>
  <button class="tb tiny" aria-label="Shrink image"><svg><use href="#c6"/></svg></button>
  <span class="sep"></span>
  <button class="tb small" aria-label="Reload"><svg><use href="#reload"/></svg></button>
  <span class="sep"></span>
  <button class="tb small" aria-label="Undo"><svg><use href="#undo"/></svg></button>
  <button class="tb small" aria-label="Redo"><svg><use href="#redo"/></svg></button>
  <button class="tb small" aria-label="Eraser"><svg><use href="#eraser"/></svg></button>
  <button class="tb" aria-label="Delete"><svg><use href="#backsp"/></svg></button>
  <button class="tb" aria-label="Pick foreground"><svg><use href="#monpick"/></svg></button>
  <button class="tb" aria-label="Pick background"><svg><use href="#monpick"/></svg></button>
  <span class="sep"></span>
  <button class="tb small" aria-label="Raise layer"><svg><use href="#lup"/></svg></button>
  <button class="tb small" aria-label="Lower layer"><svg><use href="#ldn"/></svg></button>
  <span class="sep"></span>
  <button class="tx" disabled>Tile</button>
  <span class="sep"></span>
  <button class="tx">Previous</button>
  <button class="tx" disabled>Next</button>
  <span class="sep"></span>
  <span class="grow"></span>
  <button class="tb small" aria-label="Save"><svg><use href="#save"/></svg></button>
  <span class="sep"></span>
  <button class="tx">HSV Adjustment</button>
  <button class="tx">Levels</button>
  <span class="sep"></span>
  <button class="tb" aria-label="Angle"><svg><use href="#angle"/></svg></button>
  <span class="sep"></span>
  <button class="tb on" aria-label="Brush"><svg><use href="#marker"/></svg></button>
  <button class="tb small" aria-label="No smoothing"><svg><use href="#sx"/></svg></button>
  <button class="tb small" aria-label="Basic smoothing"><svg><use href="#s1"/></svg></button>
  <button class="tb small" aria-label="Weighted smoothing"><svg><use href="#s22"/></svg></button>
  <button class="tb small" aria-label="Stabilizer"><svg><use href="#s33"/></svg></button>
  <span class="sep"></span>
  <button class="tb tiny" aria-label="Rotate left"><svg><use href="#rotl"/></svg></button>
  <button class="tb tiny" aria-label="Rotate right"><svg><use href="#rotr"/></svg></button>
  <button class="tb tiny" aria-label="Reset rotation"><svg><use href="#rot0"/></svg></button>
  <span class="sep"></span>
  <button class="tb tiny" aria-label="Split view"><svg><use href="#split"/></svg></button>
  <button class="tb tiny" aria-label="Merge view"><svg><use href="#split"/></svg></button>
  <button class="ext">»</button>
</div>

<footer class="status">
  <svg class="sm"><use href="#selmode"/></svg>
  <span class="preset">c) Pencil-3 Large 4B</span>
  <span class="profile">RGB/Alpha (8-bit integer/channel)&nbsp; sRGB-elle-V2-srgbtrc.icc</span>
  <button class="dims"><span>3,508 <u>x</u> 2,480 (33.5 MiB)</span></button>
  <svg class="dial" viewBox="0 0 20 20"><circle cx="10" cy="10" r="9" fill="#f4f4f4" stroke="#888"/><path d="M4 10h6M10 4v12" stroke="#bbb" stroke-dasharray="1 2"/><path d="M10 10h9" stroke="#333" stroke-width="1.500"/></svg>
  <span class="rot">0.00°</span>
  <span class="zoomv">32.3%</span>
  <input class="range zoomr" type="range" min="0" max="100" value="26" aria-label="Zoom">
  <button class="fitb" aria-label="Fit page"><svg><use href="#fit-page"/></svg></button>
</footer>
<script src="script.js"></script>
</body>
</html>
```
FILE: styles.css
```css
* { box-sizing: border-box; }
body {
  margin: 0; min-height: 100vh; display: flex; flex-direction: column;
  background: #d4d4d4; color: #1f1f1f;
  font: 11px/14px "Open Sans", "Noto Sans", sans-serif;
}
button, input, select { font: inherit; color: inherit; margin: 0; border-radius: 0; min-width: 0; }
button { padding: 0; border: 0; background: none; display: flex; align-items: center; justify-content: center; white-space: nowrap; }
h1, h2, p, ul { margin: 0; padding: 0; font-weight: 400; font-size: inherit; list-style: none; }
svg { display: block; fill: currentColor; color: #373737; overflow: visible; }
u { text-underline-offset: 1px; }
.sprite { position: absolute; width: 0; height: 0; }
.s2, .s3 { fill: none; stroke: currentColor; stroke-width: 1.6; }
.s3 { stroke-width: 2.6; }
.lite { fill: #d4d4d4; }
.grow { flex: 1; }

/* title and menus */
.titlebar { display: flex; align-items: center; height: 23px; background: #494949; color: #fff; padding-right: 2px; flex: none; }
.titlebar h1 { flex: 1; }
.logo { width: 14px; height: 14px; margin: 0 6px 0 3px; }
.wc { width: 46px; height: 23px; }
.wc svg { width: 11px; height: 11px; }
.menubar { display: flex; align-items: center; height: 19px; border-bottom: 1px solid #bdbdbd; padding-right: 1px; gap: 3px; flex: none; }
.menubar .logo { margin: 0 2px 0 1px; width: 14px; }
.menubar button:not(.mdi) { height: 18px; padding: 0 5px 0 6px; }
.mdi { width: 18px; height: 18px; border: 1px solid #999; border-radius: 3px; background: linear-gradient(#fff, #e6e6e6); }
.mdi svg { width: 11px; height: 11px; fill: none; stroke: #555; }

/* toolbars */
.toolbar { display: flex; align-items: center; height: 36px; padding-left: 2px; overflow: hidden; flex: none; }
.toolbar > * { flex: none; }
.toolbar > .grow { flex: 1; }
.tb { width: 33px; height: 32px; }
.tb svg { width: 22px; height: 22px; }
.tb.slim { width: 25px; margin-right: 6px; }
.tb.slim svg { width: 18px; }
.tb.big svg { width: 26px; height: 26px; }
.tb.small svg { width: 18px; height: 18px; }
.tb.tiny svg { width: 16px; height: 16px; }
.tb svg.wide { width: 30px; height: 28px; }
.tb.roomy { width: 36px; }
.tb.mir { width: 40px; }
.tb.roomy svg, .tb.mir svg { width: 20px; height: 20px; }
.top .tb:first-child { padding-right: 2px; }
.top .tb:first-child svg { width: 20px; height: 20px; }
.tb.on { background: #6c94b8; border: 2px solid #8f9599; border-radius: 3px; }
.dim svg { color: #8b8b8b; }
.sep { width: 7px; height: 20px; background: linear-gradient(90deg, transparent 3px, #c0c0c0 3px 4px, #ececec 4px 5px, transparent 5px); }
.drop { width: 24px; height: 32px; }
.drop::after, .combo::after { content: ""; border: 4px solid transparent; border-top: 5px solid #6a6a6a; border-bottom: 0; }
.drop.narrow { width: 16px; }
.spin { display: flex; width: 150px; height: 30px; border: 1px solid #999; border-radius: 3px; background: #f4f4f4; overflow: hidden; }
.spin input { flex: 1; width: 0; border: 0; padding: 0; text-align: center; background: #f4f4f4; }
.spin.short { width: 120px; }
.fill15.fill15 { background: linear-gradient(90deg, #5b90bf 15%, #f4f4f4 15%); }
.fill33.fill33 { background: linear-gradient(90deg, #5b90bf 33%, #f4f4f4 33%); }
.fill21.fill21 { background: linear-gradient(90deg, #5b90bf 21%, #f4f4f4 21%); }
.fill6.fill6 { background: linear-gradient(90deg, #5b90bf 5%, #f4f4f4 5%); }
.full.full { background: #5b90bf; color: #e4ecf3; white-space: pre; }
.steps { flex: none; width: 14px; border-left: 1px solid #999; background: linear-gradient(#fdfdfd, #e4e4e4); display: flex; flex-direction: column; justify-content: space-around; align-items: center; }
.steps::before, .steps::after { content: ""; border: 4px solid transparent; border-bottom: 4px solid #707070; border-top: 0; }
.steps::after { border-top: 4px solid #707070; border-bottom: 0; }
.combo { position: relative; display: flex; align-items: center; border: 1px solid #999; border-radius: 3px; background: linear-gradient(#fefefe, #e2e2e2); }
.combo select { appearance: none; flex: 1; height: 100%; border: 0; background: none; padding: 0 14px 0 5px; }
.combo::after { position: absolute; right: 7px; pointer-events: none; }
.blend { width: 120px; height: 32px; margin: 0 2px; }
.x1 { width: 26px; height: 32px; margin-left: 6px; border: 1px solid #aaa; border-right: 0; background: linear-gradient(#fefefe, #e2e2e2); border-radius: 3px 0 0 3px; }
.tx { height: 32px; padding: 0 7px; }
.tx:disabled { color: #999; }
.ext { width: 17px; font-size: 14px; margin-left: auto; }

/* work area */
.work { flex: 1; display: flex; align-items: stretch; }
.dock { display: flex; flex-direction: column; font-size: 10px; line-height: 13px; }
.left { width: 251px; }
.dt { display: flex; align-items: center; height: 17px; padding: 0 3px 0 2px; gap: 5px; flex: none; }
.dt h2 { flex: 1; }
.dt svg { width: 14px; height: 14px; }
.dt .lk { width: 16px; height: 16px; }
.dt button + button { margin-left: 3px; }
.grip { height: 6px; flex: none; background: repeating-linear-gradient(90deg, #aaa 0 1px, transparent 1px 3px) center / 17px 1px no-repeat; }
.tabs { display: flex; align-items: flex-end; height: 23px; flex: none; }
.tabs button { height: 21px; padding: 0 11px; border: 1px solid #a4a4a4; border-left-width: 0; border-radius: 2px 3px 0 0; background: #c3c3c3; color: #333; }
.tabs .cur { height: 23px; background: #d4d4d4; border-bottom: 0; border-left-width: 1px; padding-bottom: 2px; }
.light { padding-left: 2px; height: 22px; }
.light .cur { background: #f4f4f4; width: 41px; height: 22px; padding-bottom: 0; }
.light button { background: #dadada; height: 20px; }
.frame { margin: 0 1px; border: 1px solid #999; background: #d4d4d4; padding: 1px; margin-bottom: 1px; }
.sizes { background: #f4f4f4; border: 1px solid #a4a4a4; height: 289px; display: grid; grid-template-columns: repeat(6, 38px); grid-auto-rows: 47px; text-align: center; white-space: nowrap; }
.sizes figure { margin: 0; display: flex; flex-direction: column; align-items: center; justify-content: flex-end; }
.sizes i { height: 34px; display: flex; align-items: center; }
.sizes i b { background: #1a1a1a; border-radius: 50%; }
.sizes i b.faint { background: #bbb; border-radius: 0; }
.sizes figcaption { width: 38px; line-height: 13px; }

.palette { display: flex; justify-content: space-between; height: 126px; margin: 0 1px; border: 1px solid #a4a4a4; background: #b0b0b0; overflow: hidden; }
.swatches { display: grid; grid-template-columns: repeat(12, 11px) repeat(8, 10px); grid-auto-rows: 10px; gap: 1px; }
.sb { display: flex; flex-direction: column; flex: none; width: 15px; border-left: 1px solid #a4a4a4; background: #d9d9d9; }
.sb i { background: linear-gradient(90deg, #fdfdfd, #e8e8e8); border-bottom: 1px solid #a4a4a4; }
.sb .a { height: 14px; display: flex; align-items: center; justify-content: center; flex: none; }
.sb .a::after { content: ""; border: 4px solid transparent; border-bottom: 4px solid #707070; border-top: 0; }
.sb .dn { margin-top: auto; border-top: 1px solid #a4a4a4; border-bottom: 0; }
.sb .dn::after { border-top: 4px solid #707070; border-bottom: 0; }
.sb .pal { height: 38px; }
.sb .gap { flex: 0 0 40px; background: none; }
.sb .pre { height: 68px; }
.sb .all { flex: 1; border-bottom: 0; }
.named { height: 24px; margin: 1px 1px 0; background: #f4f4f4; padding-left: 3px; }
.named::before { content: ""; position: absolute; right: 19px; top: 0; bottom: 0; border-left: 1px solid #a4a4a4; }
.chip { width: 16px; height: 16px; background: #8c5642; }
.pname { height: 13px; line-height: 15px; padding-left: 1px; }
.palrow { display: flex; align-items: center; height: 24px; padding: 0 1px 0 0; }
.pi { width: 25px; height: 24px; }
.pi svg { width: 15px; height: 15px; }
.pi.first { margin-right: 30px; }
.raised { width: 24px; height: 23px; margin-right: 1px; border: 1px solid #a4a4a4; border-radius: 3px; background: linear-gradient(#fdfdfd, #e6e6e6); }
.more { width: 20px; height: 20px; margin: 0; color: #3b7fc4; }
.model { display: flex; align-items: center; margin: 5px 8px 7px 5px; }
.model .combo { width: 211px; height: 23px; }
.model select { padding: 0 4px; text-align-last: center; }
.model .combo::after { right: 4px; }
.model button { flex: 1; font-size: 15px; color: #555; padding-left: 6px; }
.chan { display: flex; height: 29px; padding: 0 5px; }
.chan label { width: 33px; padding-top: 5px; }
.bar { width: 161px; height: 17px; border: 1px solid #a4a4a4; position: relative; }
.bar::after { content: ""; position: absolute; left: -3px; top: 20px; border: 3px solid transparent; border-bottom: 3px solid #777; border-top: 0; }
.red { background: linear-gradient(90deg, #000, #f00); }
.green { background: linear-gradient(90deg, #000, #0f0); }
.blue { background: linear-gradient(90deg, #000, #00f); }
.num { display: flex; width: 42px; height: 21px; margin-left: 5px; border: 1px solid #a4a4a4; border-radius: 3px; overflow: hidden; background: #f4f4f4; }
.num input { flex: 1; width: 0; border: 0; padding: 0 2px; background: none; }
.cname { display: flex; align-items: center; height: 20px; padding: 0 5px; }
.cname label { width: 75px; }
.black { width: 74px; height: 20px; background: #000; margin-right: 1px; }
.cname input { width: 91px; height: 20px; border: 1px solid #a4a4a4; border-radius: 3px; background: #f4f4f4; text-align: right; }
.modes { display: flex; align-items: center; height: 28px; padding: 5px 5px 0; }
.modes input { appearance: none; width: 14px; height: 14px; border: 1px solid #999; border-radius: 50%; background: #fafafa; }
.modes input:checked { background: radial-gradient(#444 3px, #fafafa 4px); }
.modes label { margin: 0 10px 0 6px; }
.modes .combo { width: 48px; height: 22px; margin-left: 6px; }
.gtop { display: flex; justify-content: space-between; height: 32px; padding: 1px 4px 0 2px; }
.fgbg { width: 24px; height: 24px; }
.mn { width: 18px; height: 18px; }
.mn svg { width: 14px; height: 14px; }
.tri { position: relative; }
.tri::after { content: ""; position: absolute; right: 0; bottom: 1px; border: 3px solid transparent; border-top: 3px solid #777; border-bottom: 0; }
.gamut { flex: 1; display: flex; flex-direction: column; }
.wheel { position: relative; width: 120px; height: 120px; margin-left: 11px; }
.ring { position: absolute; inset: 0; border-radius: 50%; background: conic-gradient(from 270deg, red, yellow, lime, cyan, blue, magenta, red); -webkit-mask: radial-gradient(circle, transparent 47px, #000 48px); mask: radial-gradient(circle, transparent 47px, #000 48px); }
.sv { position: absolute; left: 29px; top: 29px; width: 62px; height: 62px; background: linear-gradient(transparent, #000), linear-gradient(90deg, #fff, red); }
.knob { position: absolute; width: 11px; height: 11px; border: 1px solid #fff; border-radius: 50%; background: #000; }
.hue { left: 1px; top: 55px; }
.val { left: 26px; top: 84px; }
.hist { display: flex; align-items: flex-end; padding: 8px 0 0 1px; }
.strips { flex: none; width: 141px; margin-right: 40px; }
.ticks { height: 8px; margin: 0 1px 1px 2px; background: repeating-linear-gradient(90deg, #000 0 5px, transparent 5px 8px); }
.line { height: 8px; background: #000; }
.line span { display: block; width: 9px; height: 8px; margin-left: 66px; border: 1px solid #999; }
.hist button { flex: none; width: 18px; height: 18px; margin-right: 35px; }
.hist button:last-child { margin-right: 0; }
.hist svg { width: 10px; height: 10px; }

.toolbox { width: 40px; padding-left: 6px; flex: none; }
.handle { width: 28px; height: 14px; border: 1px solid #f0f0f0; border-right-color: #999; border-bottom-color: #999; }
.toolbox button { width: 24px; height: 24px; }
.toolbox svg { width: 14px; height: 14px; }
.toolbox .on { background: #6c94b8; border: 1px solid #8f9599; border-radius: 2px; }
.toolbox hr { width: 12px; height: 1px; margin: 3px 6px 2px; border: 0; background: #efefef; }

.canvas { flex: 1; display: flex; padding: 68px 5px 69px; background: #3b3b3b; }
.sheet { flex: 1; background: #fff; }

/* brush presets */
.mid { width: 217px; margin: 0 6px; }
.mid .tabs, .right .tabs { margin-bottom: 1px; }
.mid .tabs button { flex: 92 1 0; padding: 0; }
.mid .tabs .cur { flex-grow: 63; }
.mid .tabs button:last-child { flex-grow: 62; }
.presetbar { display: flex; align-items: center; height: 24px; padding: 0 4px 0 1px; gap: 2px; }
.presetbar .combo { width: 117px; height: 24px; }
.presetbar select { padding-left: 4px; }
.tagbtn { width: 48px; height: 23px; border: 1px solid #a4a4a4; border-radius: 3px; background: linear-gradient(#fefefe, #e6e6e6); gap: 3px; padding-right: 8px; }
.tagbtn svg { width: 15px; height: 17px; }
.presetbar .mn { margin: 0 5px 0 1px; }
.zipbtn svg { width: 16px; height: 16px; }
.presets { display: flex; flex: 1 1 0; min-height: 0; margin: 0 1px; border: 1px solid #a4a4a4; background: #f4f4f4; overflow: hidden; }
.presets ul { flex: 1; height: 0; padding-top: 1px; }
.presets li { display: flex; align-items: center; height: 30px; padding-left: 1px; gap: 9px; white-space: nowrap; }
.presets li svg { width: 28px; height: 28px; overflow: hidden; }
.presets li.sel { border: 4px solid #5b90bf; background: #aef5fa; color: #123a8c; padding: 0; }
.presets li.sel svg { width: 25px; height: 22px; }
.search { display: flex; align-items: center; height: 22px; margin: 0 1px 1px; }
.search input[type=text] { width: 135px; height: 21px; border: 1px solid #a4a4a4; border-radius: 3px; background: #f4f4f4; padding: 0 2px; }
.search input[type=checkbox] { appearance: none; width: 14px; height: 14px; border: 1px solid #a4a4a4; background: #fafafa; margin: 0 5px 0 6px; }
.tags { display: grid; grid-template-columns: 80px 80px; grid-auto-rows: 20px; gap: 3px; padding: 1px 0 0 1px; height: 93px; }
.tags button, .docbtns button { border: 1px solid #a4a4a4; border-radius: 3px; background: linear-gradient(#fefefe, #e6e6e6); }
.overview { height: 207px; padding: 13px 0 14px; background: #f4f4f4; }
.view { height: 180px; border: 1px dashed #5b90bf; border-top-style: solid; border-bottom-style: solid; padding: 13px 0; }
.view div { height: 100%; background: #fff; }

/* layers */
.right { width: 258px; padding-right: 1px; }
.right .tabs button { flex: 74 1 0; padding: 0; }
.right .tabs .cur { flex-grow: 44; }
.right .tabs button:nth-child(3) { flex-grow: 88; }
.right .tabs button:last-child { flex-grow: 52; }
.lrow { display: flex; height: 31px; margin: 1px 0 1px 1px; }
.lrow .combo, .lrow .spin { width: 224px; height: 100%; }
.lrow .spin { height: 30px; }
.side { flex: 1; }
.side svg { width: 14px; height: 14px; }
.side .fun { width: 17px; height: 19px; }
.layers { flex: 1 1 0; margin: 0 1px; border: 1px solid #a4a4a4; background: #f4f4f4; }
.layers li { display: flex; height: 27px; border-bottom: 1px solid #a4a4a4; }
.eye { width: 22px; }
.eye svg { width: 16px; height: 16px; }
.lbody { flex: 1; display: flex; align-items: center; padding: 0 3px; gap: 4px; }
.lbody b, .lbody .nm { flex: 1; }
.lbody b { font-weight: 700; }
.sel .lbody { background: #5b90bf; }
.lth { width: 22px; height: 16px; border: 1px solid #a4a4a4; background: #fff; }
.trans { height: 22px; background: repeating-conic-gradient(#dcdcdc 0 25%, #fff 0 50%) 0 0 / 6px 6px; }
.kind { width: 11px; height: 11px; margin: -10px 0 0 1px; }
.st { width: 14px; height: 15px; }
.sel .st { color: #47708f; }
.lbody em { font-size: 19px; color: #b0b0b0; width: 15px; text-align: center; }
.lbody em { margin-top: -3px; }
.sel em { color: #47708f; }
.ck { width: 15px; height: 15px; background: repeating-conic-gradient(#d0d0d0 0 25%, #e8e8e8 0 50%) 0 0 / 10px 10px; }
.sel .ck { background: repeating-conic-gradient(#6f9bc3 0 25%, #8db1d2 0 50%) 0 0 / 10px 10px; }
.lacts { display: flex; align-items: center; height: 32px; }
.lacts button { width: 32px; }
.lacts .drop { width: 12px; }
.lacts svg { width: 20px; height: 20px; }
.snaps { height: 82px; margin: 0 1px; border: 1px solid #a4a4a4; background: #f4f4f4; }
.sacts { display: flex; justify-content: center; align-items: center; gap: 41px; height: 33px; padding-top: 2px; }
.sacts button { width: 32px; }
.sacts svg { width: 15px; height: 15px; }
.docbtns { display: grid; grid-template-columns: repeat(6, 1fr); gap: 1px; height: 24px; margin: 0 1px; }
.docbtns svg { width: 13px; height: 13px; }
.docbtns .lg { width: 16px; height: 16px; }
.docbtns .mut { color: #777; }
.docbtns .down { background: #c8c8c8; }
.range { appearance: none; height: 12px; background: none; }
.range::-webkit-slider-runnable-track { height: 5px; border: 1px solid #8d8d8d; border-radius: 3px; background: linear-gradient(90deg, #6aa3d5 var(--on), #c4c4c4 var(--on)); }
.range::-webkit-slider-thumb { appearance: none; width: 12px; height: 12px; margin-top: -5px; border: 1px solid #999; border-radius: 3px; background: #f8f8f8; }
.docs { margin: 4px 2px 5px; --on: 73%; }
.docs-list { display: flex; justify-content: space-between; height: 110px; margin: 0 1px 1px; border: 1px solid #a4a4a4; background: #f4f4f4; }
.doc { width: 48px; height: 34px; border: 1px solid #d8d8d8; border-width: 0 1px 1px 0; padding: 1px; background: #fff; }
.doc span { display: block; width: 45px; height: 31px; border: 1px solid #777; }
.docs-list .sb { width: 15px; }

/* status bar */
.status { display: flex; align-items: center; height: 28px; padding: 0 5px 0 7px; flex: none; }
.sm { width: 15px; height: 15px; margin-right: 15px; }
.preset { width: 462px; }
.profile { flex: 1; }
.dims { height: 21px; width: 126px; border: 1px solid #a0a0a0; }
.dial { width: 20px; height: 20px; margin: 0 8px 0 7px; }
.rot { width: 133px; }
.zoomv { width: 46px; }
.zoomr { width: 83px; margin-right: 5px; --on: 26%; }
.fitb svg { width: 16px; height: 16px; }
```
FILE: script.js
```js
// Brush sizes: label and drawn dot diameter in pixels.
const sizes = [
  ['0.7', 0], ['1.0', 0], ['1.5', -2], ['2', -2], ['2.5', -2], ['3', -2],
  ['3.5', 2], ['4', 2], ['5', 2], ['6', 4], ['7', 4], ['8', 4],
  ['9', 4], ['10', 5], ['12', 6], ['14', 7], ['16', 8], ['20', 10],
  ['25', 12], ['30', 15], ['35', 17], ['40', 20], ['50', 25], ['60', 30],
  ['70', 32], ['80', 32], ['100', 32], ['120', 32], ['160', 32], ['200', 32],
  ['250', 32], ['300', 32], ['350', 32], ['400', 32], ['450', 32], ['500', 32]
];
document.getElementById('sizes').innerHTML = sizes.map(([n, d]) => {
  const s = Math.abs(d);
  return `<figure><i><b class="${d < 0 ? 'faint' : ''}" style="width:${s}px;height:${s}px"></b></i><figcaption>${n} px</figcaption></figure>`;
}).join('');

// Concept-cookie palette, twenty colours to a row.
const palette = `
8c5642 a4644c b06e56 cf7f66 e49173 e8a58c e8b09b eab5a1 f0cec4 ffe4dd 8c5642 cf8968 f6c39b f8e1cf fde6c8 f5bc8d 9c5f3c bf957f 4a2522 000000
5d4037 8a6059 bf8f80 cfa8a6 fcf0ed fae8da f1ceb7 d9b092 bf8e7d b87868 5d5152 a8aab8 bcc6dc e0e3ee f6f6fc ecbfc0 cfa0a0 8a7175 54292a 3d2428
624c4e 946663 b29494 cfc2c6 c3b7cb a596bb 8f7f9e 836882 975c6e 714651 18252b 2c3236 564b3d 635941 835540 a38a72 a3765c b58f7c dfbab0 f9ebdf
303c4a 48628f 566b8f 757f9b 93a6bf a8b8c2 c1a89a c0b0a8 ffe1c4 ffe4dd 27363c 3a5150 47615f 556f74 a8bcc2 323f37 424229 59543b 8f9570 dbe2db
267a7b 3c8f8c 80b3a5 a8bca3 cfc19a f2dccd ecd0bb e6b99d dfa780 b28d72 1f1c12 2f2216 6e5030 a57d45 c9a26c d8bc8c ffdcb5 ffefcf fbfffb ffffff
26293c 385f41 62704c 688f58 e9bd73 dfaf7e c6796c 915053 87444c 763a43 3c4432 443620 784619 c46f26 e3930c f1bf2b c2b54d 98b573 6ba482 3a8a7e
0b2a2d 1a4045 25605e 5e9377 80b385 cfdf8d e6d07b f3bf68 f59f4b ff8e31 2c3617 4d440d 6d6223 8f6114 c16a16 1d4731 2c8469 65c2ab aee4d3 eef0ec
2a0306 50483f 7fa06c a8f290 cffcb0 ecda9a e0bb88 965f37 6c321c 4b2415 06131a 1c2c34 466160 8e9c82 e5c195 f2d79a efe2b8 c8dfbb 6bc3b2 158dc2
1b2c5a 214b80 1e5d73 24757a 32737f 59a4ab 5d8886 678d88 90ada1 9ba099 031016 082038 0e3350 114768 2b6292 50749a 6c8ba5 9ca2b2 bfbbc4 e8d9da
13152e 1a324b 3e5468 576a74 869b90 a9b79d bfb997 cfcb98 ecdab1 f8efdb 185e8e 233f72 082050 16143b 431c3f 842b5b c26190 e3abc8 e9e8f4 306786
0d0f0d 213344 1a4a50 527084 808fa3 9f9ba9 79445f ebb8bd f6e9e1 f5d1b8 15317a 464877 643f5c 5b3f62 77506a 96505e b96567 c86f7a ed827b f3968a
2a1326 37133a 622148 9e2b66 d07fbd eeb0ea 706f9c 2f3c70 1f2841 131c24 3b2f6a 553670 564080 885682 b86a6f d07f77 ff8658 ff7140 e25c36 313c7d`;
document.getElementById('swatches').innerHTML =
  palette.trim().split(/\s+/).map(c => `<span style="background:#${c}"></span>`).join('');

// Presets: name, body colour, ferrule colour, tip colour, stroke path, stroke width.
const wavy = 'M8 24q5-6 8-3t4 1 6-1';
const loop = 'M13 18q-8 5-1 7t17-2';
const presets = [
  ['c) Pencil-2', '#353a46', '#8a3030', '#e8caa4', wavy, 1],
  ['c) Pencil-3 Large 4B', '#6f9fc4', '#8fc4d8', '#3a7fc0', loop, 2, 1],
  ['c) Pencil-4 Soft', '#8c8c8c', '#cfcfcf', '#555', 'M7 22q5-4 9-3t2 4 8 1', 2],
  ['c) Pencil-5 Tilted', '#b08a2c', '#e8d050', '#222', 'M14 15q-14 6-9 9t23-1', 1],
  ['c) Pencil-6 Quick Shade', '#2c5a34', '#456a3c', '#e0cfa0', 'M8 20q8-2 10 1t10 4', 7],
  ['d) Ink-1 Precision', '#23252c', '#4c4e58', '#666', 'M8 22q3-2 4 1t5-1 8 0', 1],
  ['d) Ink-2 Fineliner', '#3a3e44', '#3f80b0', '#9aa8b4', loop, 1],
  ['d) Ink-3 Gpen', '#e0b81c', '#f0dc70', '#888', 'M8 23q7-5 9-1t10-2', 1],
  ['d) Ink-4 Pen Rough', '#1e1e1e', '#999', '#ddd', 'M8 24q7-4 8-1t11-1', 1],
  ['d) Ink-7 Brush Rough', '#e05a20', '#ccc', '#6a4a34', loop, 2],
  ['d) Ink-8 Sumi-e', '#9a7b50', '#8a7a5c', '#15181c', loop, 3],
  ['e) Marker Chisel Smooth', '#3c5c9c', '#7c98c4', '#222', 'M9 22v1M14 24q5-4 8-1t6-1', 4],
  ['e) Marker Details', '#c2496c', '#d88c9c', '#555', 'M9 23q8-5 8-1t9 0', 2],
  ['e) Marker Dry', '#3c8cc4', '#5a6a74', '#3c8cc4', 'M9 22q8 3 20 1', 6],
  ['f) Bristles-1 Details', '#8aa82c', '#c4b4cc', '#4c2820', 'M11 18q-4 7 4 6t12 0', 2],
  ['f) Bristles-2 Flat Rough', '#66605c', '#ccc4cc', '#a8a484', 'M8 21q3 5 8 1t10 2', 6],
  ['f) Bristles-3 Large Smooth', '#38383c', '#b8b0c0', '#3c3440', 'M6 24q10-2 20 1', 5]
];
document.getElementById('presets').innerHTML = presets.map(([name, body, ring, tip, path, w, sel]) => `
<li class="${sel ? 'sel' : ''}"><svg viewBox="0 0 28 28"><path fill="${sel ? '#8bc4dc' : '#cbcbcb'}" d="M0 0h28v28H0z"/>
<path d="${path}" fill="none" stroke="${sel ? '#2a6aa4' : '#333'}" stroke-linecap="round" stroke-opacity="${w > 4 ? .55 : 1}" stroke-width="${w}"/>
<path d="M14 11L23 0H28V5L19 14z" fill="${body}"/><path d="M17 7l3-3 5 4-3 3z" fill="${ring}"/>
<path d="M11 18l3-7 5 3z" fill="${tip}"/><path d="M16 10l9-10" stroke="#fff" stroke-opacity=".4"/></svg>${name}</li>`).join('');
```
